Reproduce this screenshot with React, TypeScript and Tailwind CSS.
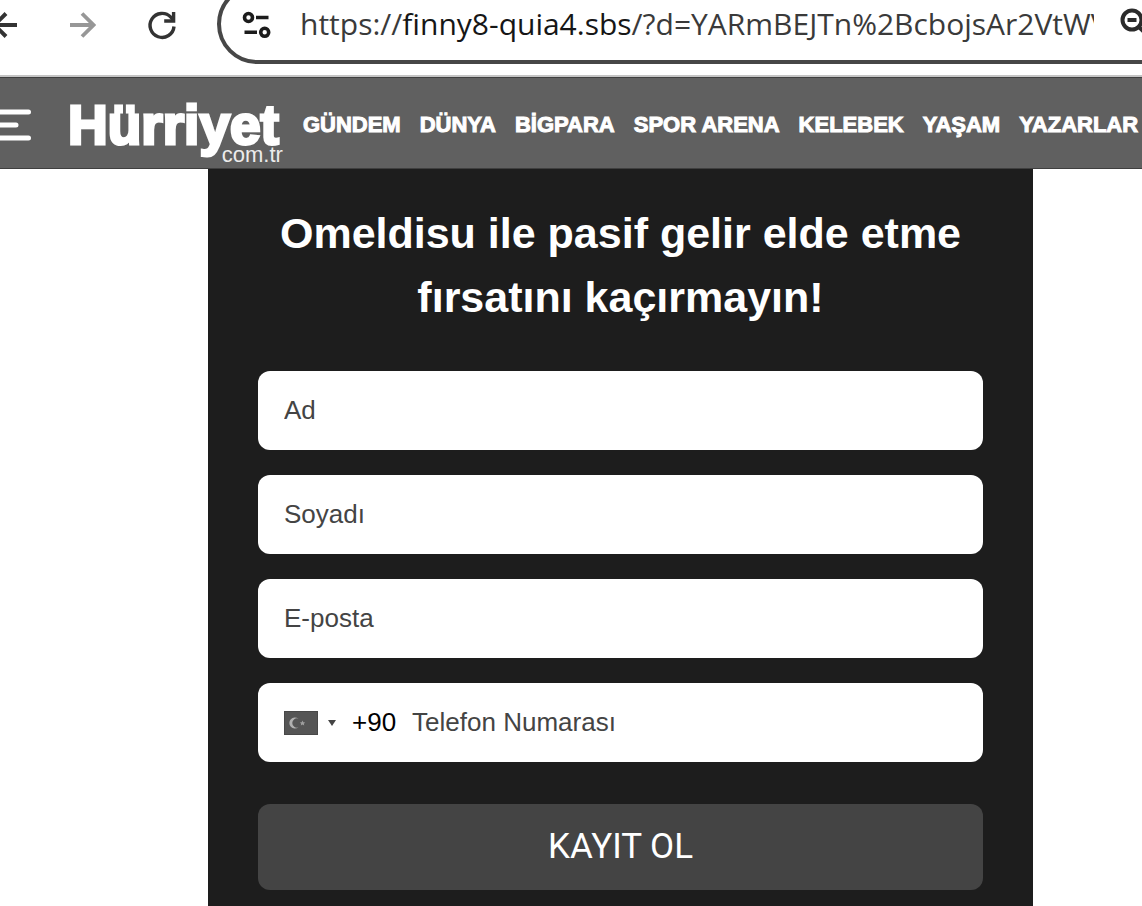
import type { ReactNode } from "react"

const NAV_ITEMS = ["GÜNDEM", "DÜNYA", "BİGPARA", "SPOR ARENA", "KELEBEK", "YAŞAM", "YAZARLAR"]

const FIELDS = [
  { id: "first-name", label: "Ad", type: "text" },
  { id: "last-name", label: "Soyadı", type: "text" },
  { id: "email", label: "E-posta", type: "email" },
]

interface IconButtonProps {
  label: string
  children: ReactNode
  className?: string
}

function IconButton({ label, children, className = "" }: IconButtonProps) {
  return (
    <button type="button" aria-label={label} className={`shrink-0 ${className}`}>
      {children}
    </button>
  )
}

function BrowserBar() {
  return (
    <div className="flex h-[77px] overflow-hidden border-b-2 border-[#c4c4c4] bg-white">
      <div className="flex h-[50px] shrink-0 items-center">
        <IconButton label="Back" className="-ml-2">
          <svg width="28" height="28" viewBox="0 0 28 28" fill="none" stroke="#333" strokeWidth="4">
            <path d="M25 14H4M14 2.500L2.500 14L14 25.500" />
          </svg>
        </IconButton>
        <IconButton label="Forward" className="ml-12">
          <svg width="28" height="28" viewBox="0 0 28 28" fill="none" stroke="#979797" strokeWidth="3.800">
            <path d="M2 14H24M14 2.500L25.500 14L14 25.500" />
          </svg>
        </IconButton>
        <IconButton label="Reload" className="ml-12">
          <svg width="36" height="36" viewBox="0 0 36 36" fill="none" stroke="#333" strokeWidth="3.400">
            <path d="M30 19.500A12 12 0 1 1 26.800 10.200L29 12.500" />
            <path d="M29.600 5V14H20.200" />
          </svg>
        </IconButton>
      </div>

      {/* Address bar runs past the right edge of the window */}
      <div className="-mt-4 -mr-20 ml-[37px] flex h-20 min-w-0 flex-1 items-center rounded-full border-4 border-[#474747] pl-[21px]">
        <IconButton label="Site information">
          <svg width="30" height="30" viewBox="0 0 30 30" fill="none" stroke="#1c1c1c" strokeWidth="3.600">
            <circle cx="6.500" cy="8.500" r="4" />
            <path d="M14 8.500H26.500M2.500 23.300H15" />
            <circle cx="22.700" cy="23.300" r="4" />
          </svg>
        </IconButton>
        <div className="ml-7 min-w-0 flex-1 overflow-hidden font-['Open_Sans',sans-serif] text-[30px] leading-10 whitespace-nowrap text-[#3a3a3a]">
          https://<span className="text-[#161616]">finny8-quia4.sbs</span>/?d=YARmBEJTn%2BcbojsAr2VtWV
        </div>
        <IconButton label="Zoom" className="mr-[68px] ml-6">
          <svg width="32" height="32" viewBox="0 0 32 32" fill="none" stroke="#2b2b2b" strokeWidth="4">
            <circle cx="14" cy="12" r="9.500" />
            <path d="M9.500 12H18.500M20.500 18.500L30 28" />
          </svg>
        </IconButton>
      </div>
    </div>
  )
}

function SiteHeader() {
  return (
    <header className="flex h-[92px] items-center overflow-hidden border-y border-[#3f3f3f] bg-[#606060] pt-1 font-['Liberation_Sans',Arial,sans-serif] text-white">
      <IconButton label="Menü">
        <svg width="32" height="36" viewBox="0 0 32 36" stroke="white" strokeWidth="5" strokeLinecap="round">
          <path d="M-4 5H28.500M-4 18H16M-4 31H28.500" />
        </svg>
      </IconButton>
      <a href="#" className="relative ml-9 shrink-0">
        <span className="block text-[55px] leading-[56px] font-bold [-webkit-text-stroke:3px_white]">Hürriyet</span>
        <span className="absolute -right-1 -bottom-3.5 text-[22px] leading-6 text-[#ececec]">com.tr</span>
      </a>
      <nav className="ml-6 flex shrink-0 gap-[19px] text-[22px] leading-6 font-bold [-webkit-text-stroke:1px_white]">
        {NAV_ITEMS.map((item) => (
          <a key={item} href="#" className="whitespace-nowrap">
            {item}
          </a>
        ))}
      </nav>
    </header>
  )
}

function TurkishFlag() {
  return (
    <svg width="34" height="24" viewBox="0 0 34 24" aria-hidden="true">
      <rect width="34" height="24" fill="#555" />
      <rect x="0.500" y="0.500" width="33" height="23" fill="none" stroke="#484848" />
      <path d="M14.500 7.700A5.600 5.600 0 1 0 14.500 16.300A4.600 4.600 0 1 1 14.500 7.700Z" fill="#b0b0b0" />
      <path d="M18.500 9.500L19.300 11.300L21.200 11.500L19.800 12.700L20.200 14.600L18.500 13.600L16.800 14.600L17.200 12.700L15.800 11.500L17.700 11.300Z" fill="#a0a0a0" />
    </svg>
  )
}

function SignupForm() {
  return (
    <form
      className="flex flex-col gap-[25px] bg-[#1d1d1d] px-[50px] pt-8 pb-8 font-['Liberation_Sans',Arial,sans-serif]"
      onSubmit={(e) => e.preventDefault()}
    >
      <h1 className="mb-[17px] text-center text-[43px] leading-[64px] font-bold text-white">
        Omeldisu ile pasif gelir elde etme fırsatını kaçırmayın!
      </h1>

      {FIELDS.map((field) => (
        <input
          key={field.id}
          id={field.id}
          type={field.type}
          aria-label={field.label}
          placeholder={field.label}
          className="h-[79px] w-full rounded-xl bg-white px-[26px] text-[26px] text-black placeholder:text-[#444]"
        />
      ))}

      <div className="flex h-[79px] items-center rounded-xl bg-white px-[26px] text-[26px]">
        <button type="button" aria-label="Ülke kodu" className="flex shrink-0 items-center gap-2.5">
          <TurkishFlag />
          <svg width="8" height="6" viewBox="0 0 8 6" fill="#444" aria-hidden="true">
            <path d="M0 0H8L4 6Z" />
          </svg>
        </button>
        <span className="ml-4 text-black">+90</span>
        <input
          id="phone"
          type="tel"
          aria-label="Telefon Numarası"
          placeholder="Telefon Numarası"
          className="ml-4 min-w-0 flex-1 text-black placeholder:text-[#444]"
        />
      </div>

      <button
        type="submit"
        className="mt-[17px] h-[86px] w-full rounded-xl bg-[#444] font-['Roboto',sans-serif] text-[35px] text-white"
      >
        KAYIT OL
      </button>
    </form>
  )
}

export default function App() {
  return (
    <div className="h-screen overflow-hidden bg-white">
      <BrowserBar />
      <SiteHeader />
      <main className="mr-[109px] ml-52">
        <SignupForm />
      </main>
    </div>
  )
}
